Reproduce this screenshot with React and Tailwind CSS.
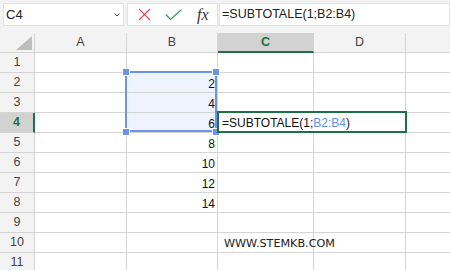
import React from "react";

const GRID = "border-r border-b border-[#d4d4d4]";

function HeaderCell({ label, selected, extra = "" }) {
  if (selected) {
    return (
      <div className="h-[20px] border-r border-[#d4d4d4] border-b-2 border-b-[#1e7145] bg-[#d2d2d2] flex items-center justify-center text-[12.5px] font-bold text-[#1e7145]">
        {label}
      </div>
    );
  }
  return (
    <div className={`h-[20px] ${GRID} bg-[#f3f3f3] flex items-center justify-center text-[12.5px] text-[#444] ${extra}`}>
      {label}
    </div>
  );
}

function RowHeader({ n, selected }) {
  if (selected) {
    return (
      <div className="h-[20px] border-b border-[#d4d4d4] border-r-2 border-r-[#1e7145] bg-[#d2d2d2] flex items-center justify-center text-[12.5px] font-bold text-[#1e7145]">
        {n}
      </div>
    );
  }
  return (
    <div className={`h-[20px] ${GRID} bg-[#f3f3f3] flex items-center justify-center text-[12.5px] text-[#444]`}>
      {n}
    </div>
  );
}

export default function App() {
  const bValues = { 2: "2", 3: "4", 4: "6", 5: "8", 6: "10", 7: "12", 8: "14" };
  const rows = [1, 2, 3, 4, 5, 6, 7, 8, 9, 10, 11];

  return (
    <div
      className="w-[450px] h-[270px] overflow-hidden bg-white relative"
      style={{ fontFamily: '"Liberation Sans", Arial, sans-serif' }}
    >
      {/* toolbar */}
      <div className="h-[33px] bg-[#f3f3f3] flex items-start pt-[3px]">
        <div className="ml-[3px] w-[121px] h-[23px] shrink-0 bg-white border border-[#e1e1e1] flex items-center justify-between pl-[2px] pr-[3px]">
          <span className="text-[13px] text-[#222] leading-none">C4</span>
          <svg width="6" height="4" viewBox="0 0 6 4" className="mt-[1px]">
            <path d="M0.5 0.5 L3 3 L5.5 0.5" fill="none" stroke="#444" strokeWidth="1" />
          </svg>
        </div>
        <div className="ml-[3px] w-[91px] h-[23px] shrink-0 bg-white border border-[#e1e1e1] flex items-center">
          <svg width="13" height="13" viewBox="0 0 13 13" className="ml-[10px]">
            <path d="M1 1 L12 12 M12 1 L1 12" stroke="#e5484d" strokeWidth="1.2" fill="none" />
          </svg>
          <svg width="17" height="12" viewBox="0 0 17 12" className="ml-[14px] mt-[1px]">
            <path d="M0.8 5.5 L5.5 10.5 L16.3 0.8" stroke="#2f9a4c" strokeWidth="1.2" fill="none" />
          </svg>
          <span
            className="ml-[15px] italic text-[16px] text-[#333] leading-none"
            style={{ fontFamily: '"Liberation Serif", "Times New Roman", serif' }}
          >
            fx
          </span>
        </div>
        <div className="ml-[1px] flex-1 h-[23px] bg-white border border-[#e1e1e1] flex items-center pl-[2px]">
          <span className="text-[12.5px] text-[#222] whitespace-nowrap">=SUBTOTALE(1;B2:B4)</span>
        </div>
      </div>

      {/* grid */}
      <div className="grid grid-cols-[35px_92px_91px_96px_92px_92px] auto-rows-[20px] w-max">
        <div className={`h-[20px] ${GRID} bg-[#f3f3f3] flex items-end justify-end pr-[2px] pb-[2px]`}>
          <svg width="16" height="14" viewBox="0 0 16 14">
            <path d="M16 0 L16 14 L0 14 Z" fill="#bdbdbd" />
          </svg>
        </div>
        <HeaderCell label="A" />
        <HeaderCell label="B" />
        <HeaderCell label="C" selected />
        <HeaderCell label="D" />
        <HeaderCell label="E" extra="pl-[4px]" />

        {rows.map((r) => (
          <React.Fragment key={r}>
            <RowHeader n={r} selected={r === 4} />
            <div className={`h-[20px] ${GRID}`} />
            <div
              className={`h-[20px] ${GRID} flex items-end justify-end pr-[2px] pb-[1px] text-[12px] leading-[14px] text-[#111] ${
                r >= 2 && r <= 4 ? "bg-[#eef3fd]" : ""
              }`}
            >
              {bValues[r] || ""}
            </div>
            <div className={`h-[20px] ${GRID} flex items-end pb-[2px]`}>
              {r === 10 ? (
                <span
                  className="ml-[6px] text-[11.2px] leading-[13px] text-[#222] whitespace-nowrap"
                  style={{ fontFamily: '"DejaVu Sans", Verdana, sans-serif' }}
                >
                  WWW.STEMKB.COM
                </span>
              ) : null}
            </div>
            <div className={`h-[20px] ${GRID}`} />
            <div className={`h-[20px] ${GRID}`} />
          </React.Fragment>
        ))}
      </div>

      {/* reference range border B2:B4 */}
      <div className="absolute left-[125px] top-[71px] w-[92px] h-[61px] border-2 border-[#6a94e9] pointer-events-none" />
      <div className="absolute left-[123px] top-[69px] w-[6px] h-[6px] bg-[#6a94e9] outline outline-1 outline-white" />
      <div className="absolute left-[213px] top-[69px] w-[6px] h-[6px] bg-[#6a94e9] outline outline-1 outline-white" />
      <div className="absolute left-[123px] top-[129px] w-[6px] h-[6px] bg-[#6a94e9] outline outline-1 outline-white" />
      <div className="absolute left-[213px] top-[129px] w-[6px] h-[6px] bg-[#6a94e9] outline outline-1 outline-white" />

      {/* active cell editor C4 */}
      <div className="absolute left-[217px] top-[111px] w-[190px] h-[22px] border-2 border-[#1e7145] bg-white flex items-end pl-[3px] pb-[1px]">
        <span className="text-[12px] leading-[14px] text-[#111] whitespace-nowrap">
          =SUBTOTALE(1;<span className="text-[#5f8fef]">B2:B4</span>)
        </span>
      </div>
    </div>
  );
}
